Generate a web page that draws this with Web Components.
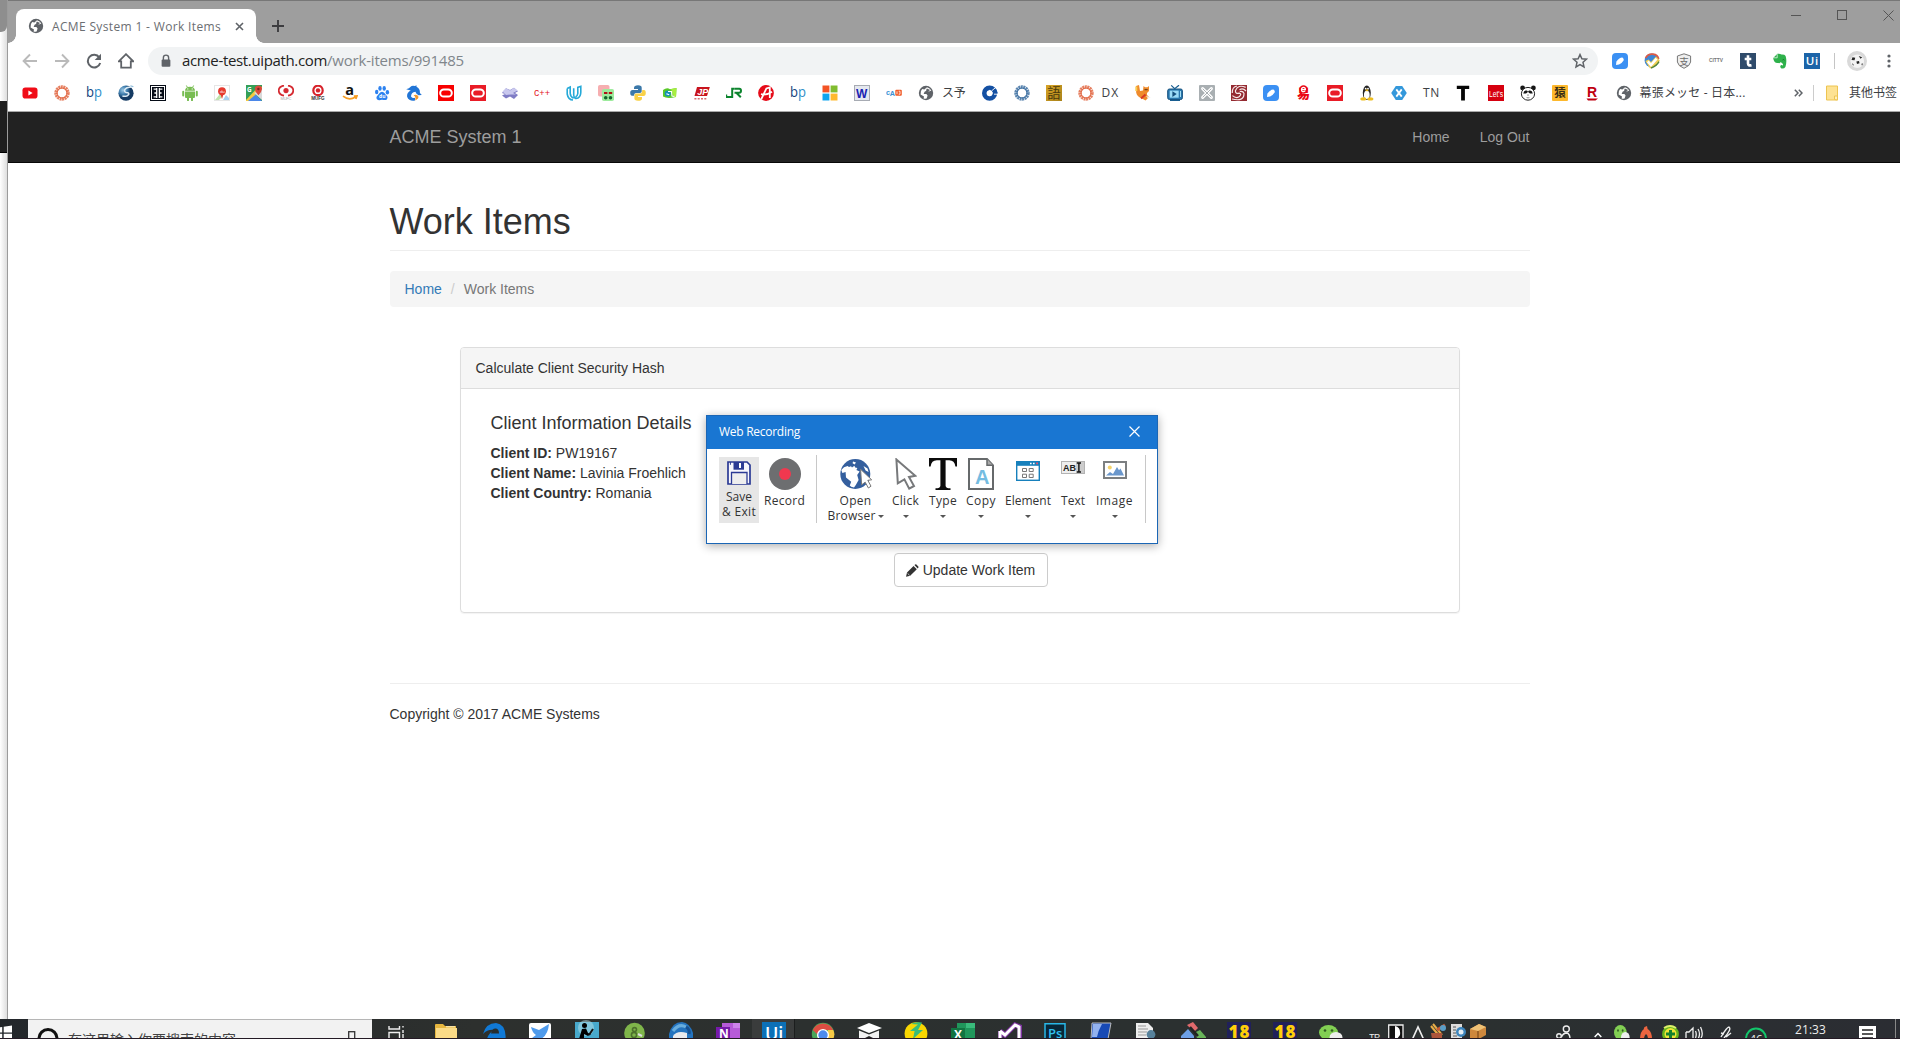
<!DOCTYPE html>
<html lang="zh">
<head>
<meta charset="utf-8">
<title>ACME System 1 - Work Items</title>
<style>
html,body{margin:0;height:100%;overflow:hidden;background:#fff}
body{font-family:"Liberation Sans","Noto Sans CJK SC",sans-serif}
</style>
</head>
<body>
<desktop-screen></desktop-screen>
<script>
const UI='"Open Sans","Noto Sans","Noto Sans CJK SC",sans-serif';
const globe='<circle cx="8" cy="8" r="7.2" fill="#5f6368"/><path d="M9 2.2Q12 3 13.3 5.4L11 6.6L8.8 5.6L6.6 6.8L5.6 9H8.4L9.6 10.6L8.6 13.6Q7 14 5.6 13.4L6 11.4L2.6 9.4Q2 6 4.2 3.9L6.4 4.6Z" fill="#fff"/><path d="M8.8 3.4L12.2 5L10 6.4L8 5.4Z" fill="#5f6368"/>';
const ring=c=>`<circle cx="8" cy="8" r="6" fill="none" stroke="${c}" stroke-width="3.4" stroke-dasharray="1.9 .5" opacity=".8"/><circle cx="8" cy="8" r="5" fill="none" stroke="${c}" stroke-width=".9"/>`;
const bp='<text x="0" y="11.6" font-family="Open Sans" font-size="15" fill="#12427c" textLength="16" lengthAdjust="spacingAndGlyphs"><tspan>b</tspan><tspan fill="#2e8ec8">p</tspan></text>';
const oracle=c=>`<rect width="16" height="16" fill="${c}"/><rect x="2.2" y="4.4" width="11.6" height="7.2" rx="3.6" fill="none" stroke="#fff" stroke-width="2"/>`;
const feather=`<rect width="16" height="16" rx="4" fill="#3b90f3"/><path d="M4 12L4.4 8.4Q7.6 4.4 10.4 4.6Q12.4 6 11.6 7.6Q9.4 11.2 7 11.4Z" fill="#fff"/>`;
const ic={
globe,
yt:'<rect x=".5" y="2.4" width="15" height="11.2" rx="2.8" fill="#f00c17"/><path d="M6.4 5.4L10.6 8L6.4 10.6Z" fill="#fff"/>',
ringO:ring('#e0603a'),ringB:ring('#33689c'),bp,
sphere:'<defs><radialGradient id="s" cx=".3" cy=".3"><stop offset="0" stop-color="#9cc9e5"/><stop offset=".6" stop-color="#3a78a8"/><stop offset="1" stop-color="#153b63"/></radialGradient></defs><circle cx="8" cy="8.2" r="7.6" fill="url(#s)"/><path d="M14.4 2Q8 1.8 6.6 5Q6 7.6 9.8 7.8Q12.4 9 8.8 11Q6.2 11.7 4.4 10.8" fill="none" stroke="#dcebf5" stroke-width="1.5"/><path d="M12.5 .8L15.4 1.6" stroke="#7fb2d4"/>',
blk:'<rect width="16" height="16" fill="#050b16"/><rect x="1.5" y="1.5" width="13" height="13" fill="none" stroke="#fff"/><path d="M6.7 3V13M9.4 3V13M3.6 4.2H6.7M4.4 8H6.7M3.6 11.8H6.7M9.4 4.2H12.4M9.4 8H11.6M9.4 11.8H12.4" stroke="#fff" stroke-width="1.3"/>',
android:'<path d="M3 5.7Q3.3 1.7 8 1.7T13 5.7ZM3 6.4H13V12Q13 13 12 13H4Q3 13 3 12Z" fill="#79bd53"/><path d="M1.2 6.8V10.6M14.8 6.8V10.6M6 12V15.2M10 12V15.2" stroke="#79bd53" stroke-width="2" stroke-linecap="round"/><path d="M4.4 .5L5.4 2.4M11.6 .5L10.6 2.4" stroke="#79bd53"/><circle cx="5.8" cy="3.9" r=".6" fill="#fff"/><circle cx="10.2" cy="3.9" r=".6" fill="#fff"/>',
pin:'<rect x=".5" y=".5" width="15" height="15" fill="#fff" stroke="#e6e6e6"/><path d="M1 15L6 9L8 12L5 15Z" fill="#bfe4ad"/><path d="M9 15L12 10L15 13V15Z" fill="#a7d3f1"/><circle cx="8" cy="6.2" r="3.9" fill="#e53a2f"/><path d="M6.4 9H9.6L8 14Z" fill="#e53a2f"/><text x="5.9" y="7.8" font-size="4" fill="#fff" font-family="Open Sans">du</text>',
gmap:'<rect width="16" height="16" fill="#349f57"/><path d="M0 16L8 8L16 16Z" fill="#4b87e8"/><path d="M0 15L13 1L16 2V4L2 16H0Z" fill="#f4ca3f"/><path d="M8 8L16 15V4Z" fill="#dadada"/><path d="M8.8 4A3.5 3.5 0 0 1 16 4Q15.7 7 12.5 10.3Q9 7 8.8 4Z" fill="#d9483b"/><circle cx="12.4" cy="4" r="1.2" fill="#7c241e"/><text x="1" y="6.8" font-size="6.4" fill="#fff" font-family="Open Sans" font-weight="700">G</text>',
mufc:'<path d="M6 .6Q.8 1.4 .7 5.6Q.9 9.7 6 10.7M10 .6Q15.2 1.4 15.3 5.6Q15.1 9.7 10 10.7" fill="none" stroke="#d52b32" stroke-width="1.8"/><circle cx="8" cy="5.6" r="2.6" fill="#d52b32"/><text x="2.5" y="15.4" font-size="4" fill="#aaa" font-family="Liberation Sans" textLength="11">MUFC</text>',
mufg:'<circle cx="8" cy="5.4" r="4.7" fill="none" stroke="#d7222a" stroke-width="2.2"/><circle cx="8" cy="5.4" r="2.2" fill="#d7222a"/><text x="1.2" y="15.2" font-size="4.6" font-weight="700" fill="#333" font-family="Liberation Sans" textLength="13.5">MUFG</text>',
amz:'<text x="3.2" y="9.7" font-size="14.5" font-weight="700" font-family="Open Sans" fill="#111">a</text><path d="M1 11.2Q7 16 13.5 12M11.8 11.2L15 11L13.8 14" fill="none" stroke="#f79d23" stroke-width="1.7"/>',
baidu:'<g fill="#2d82f0"><ellipse cx="2.7" cy="7" rx="1.7" ry="2.2"/><ellipse cx="6" cy="3.4" rx="1.7" ry="2.4"/><ellipse cx="10.2" cy="3.4" rx="1.7" ry="2.4"/><ellipse cx="13.4" cy="7.2" rx="1.7" ry="2.2"/><path d="M8 6.8Q10 6.8 12 10Q14.6 12 12.8 14.4Q11.7 15.6 8 14.8Q4.2 15.7 3 14.3Q1.4 12.2 4.2 9.8Q6 6.9 8 6.8Z"/></g><text x="5" y="13.4" font-size="5" font-weight="700" font-family="Open Sans" fill="#fff">du</text>',
dolphin:'<path d="M.2 4.2Q3.4 3.7 4.6 1.8Q6 0 9 1L10.5 .2V1.8Q14.2 3.6 13.9 8L15.8 10L12.6 10.2Q10 9 9.4 6.8Q5 7.6 5 11.5Q6.5 13.8 9 12.8V15.6Q3.2 16.7 1.2 12Q.4 7.4 4.8 5.4Z" fill="#2175d6"/><path d="M7.6 10.2Q10 8.8 12.2 11.1Q13.4 14 9 15.6Q10.5 12.3 7.6 10.2Z" fill="#f39a2f"/>',
orA:oracle('#f80000'),orB:oracle('#e91b26'),
cross:'<path d="M0 8L4 3.2L8 5L12 2.8L16 6.2L13 8L16 10L12 14L8 11.4L4 13.4L0 10.6L3 9Z" fill="#7f7cc5"/><path d="M.5 6.4L4 3.2L8 5.4L12 2.8L15.6 5.6L11 8L14 9.4L9 9.4L4 10Z" fill="#c9c8ee"/>',
cpp:'<text x="0" y="10.5" font-size="9" fill="#e3111b" font-family="Liberation Mono" textLength="16" lengthAdjust="spacingAndGlyphs">C++</text>',
uda:'<path d="M1.2 3.5L4.2 2V8.3Q4.4 12 7.6 13.3M7.7 3.2V10Q8 14.5 12 13Q14.8 11.4 14.8 7V1.3L11.8 2.4V8.5Q11.5 11 9.5 12M1.2 3.5V9Q2.2 14.8 7 15" fill="none" stroke="#25a9d8" stroke-width="1.6"/>',
db:'<rect x="0" y="0" width="11.5" height="11.5" rx="1.8" fill="#f6aeb0"/><rect x="4" y="4" width="12" height="12" rx="1.8" fill="#9deb9d"/><path d="M6 8H9.4M10.8 8H14.2" stroke="#b11217" stroke-width="2"/><circle cx="7.7" cy="12.7" r="1.8" fill="#15642c"/><circle cx="12.5" cy="12.7" r="1.8" fill="#15642c"/>',
py:'<path d="M4 3Q4 .3 8 .3T11.7 3V6.6Q11.7 8 10 8H6Q4 8 4 10.7H2Q.2 10.7 .2 7.8T2.8 5H8V4H4Z" fill="#3b78a9"/><path d="M12.2 5H14Q15.8 5 15.8 8T13.5 11H8V12H12V13.4Q12 15.7 8 15.7T4.4 13V10.2Q4.4 8.5 6.2 8.5H10Q12.2 8.5 12.2 6Z" fill="#f9d147"/>',
grn:'<path d="M1 5Q5 2 8 4.3L14.5 3L14 12Q5 14 1 11.5Z" fill="#59c928"/><path d="M9 4L14.5 3L14 12H12Z" fill="#a8ee3f"/><circle cx="5.7" cy="8.6" r="3" fill="#1590b8"/><path d="M6 6.5H9.5L10 11L12.4 11.3M4.4 8.7L7.2 9.8" fill="none" stroke="#fff" stroke-width="1.2"/>',
jp:'<path d="M3 2H15.8L13 11H.5Z" fill="#c8141d"/><text x="3.3" y="9.8" font-size="9" font-style="italic" font-weight="700" font-family="Liberation Sans" fill="#fff">JP</text><path d="M.4 13.8H12.5" stroke="#d86d70" stroke-width="1.6" stroke-dasharray="2 1.3"/>',
jr:'<path d="M.2 9.5V11.9H6.2V3.7H8.5M8.7 3.7H13.3Q15 3.8 15 5.7T13.3 7.7H8.5M10.6 8L14.8 12.3" fill="none" stroke="#0c842e" stroke-width="2"/>',
a:'<circle cx="8" cy="8" r="7.9" fill="#e60b19"/><path d="M3.2 14.3L8.4 3.4L11.8 2.5V13M3 9.2Q8 10.7 14 6.7" fill="none" stroke="#fff" stroke-width="1.8"/>',
ms:'<path d="M.5 .5H7.4V7.4H.5Z" fill="#f35325"/><path d="M8.6 .5H15.5V7.4H8.6Z" fill="#81bc2f"/><path d="M.5 8.6H7.4V15.5H.5Z" fill="#10a5ef"/><path d="M8.6 8.6H15.5V15.5H8.6Z" fill="#ffb92d"/>',
w:'<rect x=".5" y=".5" width="15" height="15" fill="#e5e8ef" stroke="#a7abb3"/><text x="2" y="12.8" font-size="12" font-weight="700" font-family="Liberation Sans" fill="#1823b3">W</text>',
cad:'<text x="0" y="9.7" font-size="7.2" font-weight="700" font-family="Liberation Sans" fill="#398fd4">c<tspan dx="-.3" dy="1">A</tspan></text><rect x="9.3" y="4.8" width="6.5" height="6" rx="1" fill="#f05b28"/><path d="M11 6.3V9.2M12.7 6.2H14V9.2H12.7" fill="none" stroke="#fff" stroke-width=".8"/>',
ccb:'<circle cx="7.6" cy="8.2" r="5.3" fill="none" stroke="#1450a3" stroke-width="4.6"/><path d="M10.5 1L14.4 4.5L16 8.4H11.5Z" fill="#1450a3"/><path d="M7.8 4.8L11 8L7.8 11.2L4.6 8Z" fill="#fff"/><path d="M9.5 6L13.8 2.4M12 9.2H16" stroke="#fff" stroke-width=".9"/>',
go:'<defs><linearGradient id="o" y2="1"><stop stop-color="#d7a326"/><stop offset="1" stop-color="#a9821a"/></linearGradient></defs><rect width="16" height="16" fill="url(#o)"/><text x="1.3" y="12.8" font-size="13.4" font-family="Noto Sans CJK JP" fill="#4a3a0c">語</text>',
cat:'<path d="M1 1L4 0L5 6L8 5.4L8.5 1L10 2.2H12.5L14 1V6L12 8V10L14 12L10.5 15.5L7 13.5Q2.2 12 1.2 7.8Z" fill="#ef8b2c"/><path d="M9.5 4.7H12.7" stroke="#5b3010"/><path d="M6 13.5L10.5 9.6" stroke="#d63a26" stroke-width="2"/><path d="M11 11L15.8 12.3L13 13.5Z" fill="#eee"/><path d="M1.3 1.5V6" stroke="#f8cd55" stroke-width="2"/>',
tv:'<rect x=".7" y="4" width="14.7" height="10.5" rx="1.7" fill="#2a78ae" stroke="#17527f"/><rect x="2.7" y="5.6" width="9" height="7.1" fill="#9bdbf7"/><path d="M5.4 6.2L9.7 9.1L5.4 12Z" fill="#164f7c"/><path d="M4.2 .4L7.7 3.7L12 .2M3 15.5H13" fill="none" stroke="#185d90" stroke-width="1.2"/><path d="M13.5 6V12" stroke="#a6def3"/>',
tool:'<rect width="16" height="16" rx="1" fill="#a9afb2"/><path d="M3.6 3.6L12.4 12.4M12.4 3.6L3.6 12.4" stroke="#fff" stroke-width="3" stroke-linecap="round"/><path d="M3.7 3.7L12.3 12.3M12.3 3.7L3.7 12.3" stroke="#a9afb2" stroke-width="1"/>',
swirl:'<rect width="16" height="16" fill="#942a31"/><path d="M14.7 2.4Q7-1 4.5 5.5Q4 9 8.3 8.2Q11.3 9 8 11.7Q5 13.8 1.4 10.6M15 6Q12 2.4 8.5 4.7M1 14Q13 17 13 8.4Q12 5.7 8.8 6.5M1.3 8Q1 2 6 1" fill="none" stroke="#f7e8e8" stroke-width="1.2"/>',
feather,
yi:'<text x="2" y="13.4" font-size="13" font-weight="900" font-family="Noto Sans CJK SC" fill="#ea0714">易</text><circle cx="8.5" cy="4.5" r="4.2" fill="#ea0714"/><path d="M6.6 4.6H10.4Q10.4 2.4 8.5 2.4T6.5 4.6T8.7 6.6L10.3 6" fill="none" stroke="#fff" stroke-width="1.2"/>',
tux:'<ellipse cx="7.8" cy="7.8" rx="4" ry="7.3" fill="#252525"/><ellipse cx="7.8" cy="10" rx="2.9" ry="4.3" fill="#fff"/><circle cx="6.7" cy="3.7" r=".9" fill="#fff"/><circle cx="9" cy="3.7" r=".9" fill="#fff"/><path d="M6 5L8 4.2L9.8 5.1L8 6.5Z" fill="#e8b41b"/><ellipse cx="4.3" cy="13.9" rx="3" ry="1.6" fill="#edbd21"/><ellipse cx="11.4" cy="13.9" rx="3" ry="1.6" fill="#edbd21"/>',
xam:'<path d="M4.8 1H11.2L15.8 8L11.2 15H4.8L.2 8Z" fill="#3498db"/><path d="M5.3 4.4L10.7 11.6M10.7 4.4L5.3 11.6" stroke="#fff" stroke-width="1.8"/>',
T:'<path d="M.8 .8H13.2V3.9H8.9V15.6H5.1V3.9H.8Z" fill="#050505"/>',
lets:'<rect width="16" height="16" fill="#d6000f"/><text x="1" y="11.7" font-size="8.5" font-family="Liberation Sans" fill="#fff" textLength="14" lengthAdjust="spacingAndGlyphs">Let\'s</text>',
panda:'<circle cx="2.6" cy="3" r="2.4" fill="#161616"/><circle cx="13.4" cy="3" r="2.4" fill="#161616"/><ellipse cx="8" cy="8.8" rx="6.6" ry="6.4" fill="#fff" stroke="#222"/><path d="M3.2 8.4Q4 4.9 6.7 5.6T6 8.6ZM12.8 8.4Q12 4.9 9.3 5.6T10 8.6Z" fill="#171717"/><path d="M7.2 9.8H8.8L8 10.8Z"/><path d="M6.6 12.6Q8 13.2 9.4 12.6" fill="none" stroke="#555" stroke-width=".7"/>',
yuan:'<rect width="16" height="16" rx="1" fill="#fdb82c"/><text x="2.3" y="12.2" font-size="11.5" font-weight="700" font-family="Noto Sans CJK SC" fill="#3a2d14">猿</text>',
R:'<text x="3" y="12" font-size="14" font-weight="700" font-family="Liberation Sans" fill="#bf0010">R</text><path d="M2.5 13.4H14L11.5 15.4H4Z" fill="#bf0010"/>',
folder:'<path d="M1.5 1H12.5V15H1.5Z" fill="#fde293" stroke="#edc451"/><path d="M9.5 14.5V11H12.5V15Z" fill="#fff0bd" stroke="#edc451"/>',
back:'<path d="M15 8H2M8 1.5L1.6 8L8 14.5" fill="none" stroke="#bababa" stroke-width="1.9"/>',
fwd:'<path d="M1 8H14M8 1.5L14.4 8L8 14.5" fill="none" stroke="#bababa" stroke-width="1.9"/>',
reload:'<path d="M13.3 4.5A6.3 6.3 0 1 0 14.2 10" fill="none" stroke="#5f6368" stroke-width="2"/><path d="M15 .7V7H8.7Z" fill="#5f6368"/>',
home:'<path d="M.8 8.3L8 1.2L15.2 8.3H12.8V14.7H3.2V8.3Z" fill="none" stroke="#5f6368" stroke-width="1.8"/>',
lock:'<rect x="3" y="6.2" width="10" height="8.3" rx="1.2" fill="#5f6368"/><path d="M5 7V4.2Q5 1.3 8 1.3T11 4.2V7" fill="none" stroke="#5f6368" stroke-width="1.6"/>',
star:'<path d="M8 1.6L9.9 5.8L14.5 6.2L11 9.3L12 13.9L8 11.5L4 13.9L5 9.3L1.5 6.2L6.1 5.8Z" fill="none" stroke="#5f6368" stroke-width="1.5"/>',
chk:'<circle cx="7.6" cy="7.4" r="7" fill="#3c86d6"/><path d="M1.6 5Q4 .6 9 1.2T14.6 6" stroke="#dd5b45" stroke-width="1.8" fill="none"/><path d="M1.4 8L6 15.4Q13 13 15.8 7.5L12 3.4L7 9L4.6 6.4Z" fill="#f0cf55"/><path d="M3.8 8.4L7 12L12.6 5.6" fill="none" stroke="#fff" stroke-width="2.5"/><path d="M7 15Q12.6 13 15 8.6" fill="none" stroke="#54863b" stroke-width="1.4"/>',
zhi:'<path d="M8 .8L14.6 3V9Q14 13 8 15.3Q2 13 1.4 9V3Z" fill="#eee" stroke="#777"/><text x="3.2" y="11.5" font-size="9.6" font-family="Noto Sans CJK SC" fill="#6b6b6b">支</text>',
city:'<text x="1" y="9" font-size="5.4" font-weight="700" font-family="Liberation Sans" fill="#777" textLength="14" lengthAdjust="spacingAndGlyphs">CITTV</text>',
tum:'<rect width="16" height="16" fill="#2f4b6b"/><path d="M8 2.2V10.6Q8 13 11.5 12.2M4.7 6H11.3" fill="none" stroke="#fff" stroke-width="2.6"/>',
ever:'<path d="M1.2 5L5.4 .8Q8 .4 9.4 1.6Q12.6 1.4 13.6 3Q15.2 8.6 13.4 14Q12 16 9.4 15.4Q7.4 14 8.8 12.2Q10 11.6 11 12.6Q11.4 10.6 9.8 10L8.8 9Q8 10.6 6.4 10Q1.9 10.8 1.2 5Z" fill="#2eb14b"/><path d="M1.6 4.8H5.2V1.2" fill="none" stroke="#fff" stroke-width=".7"/><path d="M10.6 7Q11.6 6 12.4 7.2" fill="none" stroke="#176c2c"/>',
ui:'<rect width="16" height="16" fill="#1c64a8"/><text x="1.8" y="12.3" font-size="11.5" font-weight="600" font-family="Open Sans" fill="#fff" textLength="12.5">Ui</text>',
ava:'<circle cx="8" cy="8" r="8" fill="#d9d9d9"/><circle cx="8.2" cy="8.2" r="5.4" fill="#f4f4f4"/><path d="M4.4 5L6.6 5.3L6 7.4L3.6 7.2ZM9.4 4L12.2 5L10.8 6.2ZM7.5 8.4L9.6 8L10 9.8L8 10.4ZM4 9.8L5.2 10.6L5 12ZM11.5 10.2L12.8 9.9L12 11.8Z" fill="#252525"/>'
};
const win={
save:['0 0 24 24','<path d="M1 1H20L23 4V23H1Z" fill="#f6f6fc" stroke="#2b3a94" stroke-width="1.7"/><path d="M6.5 1H17V8.7H6.5Z" fill="#2b3a94"/><path d="M13 2V7" stroke="#fff" stroke-width="2"/><path d="M4.5 23V11.5H20V23" fill="#eee" stroke="#2b3a94" stroke-width="1.3"/><path d="M3.4 1V3.8" stroke="#2b3a94"/>'],
rec:['0 0 32 32','<circle cx="16" cy="16" r="16" fill="#6d6e70"/><circle cx="16" cy="16" r="6" fill="#f0384f"/>'],
open:['0 0 32 32','<circle cx="15.3" cy="16" r="15" fill="#345f9e"/><path d="M1.3 12Q3.6 8.6 7.6 8L9 9L11 8.2L12 9.6L14.4 7.8L15.2 9.6L17.4 10L16.4 12L19.6 13.4L17.2 17L18.6 22L15.8 27L14 29.6Q10.5 29 9.8 27.6L11.2 23.7L6 19.5L5.6 14L2.4 15Z" fill="#fff"/><path d="M13 3.4L16 4.4L14.6 6.4L12.6 5.2ZM23.5 8L27.5 10.4L28.6 14L25.6 12.6Z" fill="#fff"/><path d="M20.6 11.3L31.7 21.8L27.8 22.3L31 28.2L28.4 30L25.2 24.2L21.6 26.8Z" fill="#fff" stroke="#777"/>'],
click:['0 0 22 32','<path d="M1.4 1.4L20.2 17.8L14 19L19 28L14.2 30.6L9.4 21.4L2.8 25.3Z" fill="#fff" stroke="#77797b" stroke-width="2"/>'],
type:['0 0 28 32','<path d="M0 0H28V8.5H26.4Q25.6 2.2 20.2 2.2H16.6V27.7Q16.6 30.2 21.5 30.3V32H6.5V30.3Q11.4 30.2 11.4 27.7V2.2H7.8Q2.4 2.2 1.6 8.5H0Z" fill="#0b0b0b"/>'],
copy:['0 0 26 32','<path d="M1 1H19L25 7.3V31H1Z" fill="#fff" stroke="#66696b" stroke-width="2"/><path d="M19 1V7.3H25" fill="#aaa" stroke="#66696b" stroke-width="1.5"/><text x="7" y="26" font-size="20" font-weight="700" font-family="Liberation Sans" fill="#74bce1">A</text>'],
elem:['0 0 24 20','<rect x=".7" y=".7" width="22.6" height="18.6" fill="#fff" stroke="#1780bc" stroke-width="1.4"/><path d="M0 0H24V4.8H0Z" fill="#1780bc"/><path d="M14 2.4H15.6M17 2.4H18.6" stroke="#fff" stroke-width="1.5"/><path d="M20.2 2.4H22" stroke="#f44b68" stroke-width="1.6"/><path d="M6.5 7.5H10.5V10.5H6.5ZM13.2 7.5H17.2V10.5H13.2ZM6.5 13.2H10.5V16.5H6.5ZM13.2 13.2H17.2V16.5H13.2Z" fill="none" stroke="#777"/>'],
text:['0 0 24 13','<rect x=".5" y=".5" width="23" height="12" fill="#eee" stroke="#b3b3b3"/><rect x="15" y="1" width="8" height="11" fill="#ccc"/><text x="2" y="9.6" font-size="9" font-weight="700" font-family="Liberation Sans" fill="#222" textLength="13" lengthAdjust="spacingAndGlyphs">AB</text><path d="M15.8 2H20M15.8 11H20M17.9 2V11" stroke="#111" stroke-width="1.4"/>'],
image:['0 0 24 18','<rect x="1" y="1" width="22" height="16" fill="#fff" stroke="#7c7f81" stroke-width="2"/><path d="M3 14.5L7 11L10 13L14 6L16 9.2L17.5 7.6L21 14.5Z" fill="#6a97cc"/><circle cx="6.8" cy="6.5" r="2" fill="#f5d46b"/>']
};
const tb={
start:['0 0 13 20','<path d="M0 8.3L2.2 8V13.4H0ZM3.7 7.7L12 6.6V13.4H3.7ZM0 14.8H2.2V20H0ZM3.7 14.8H12V20H3.7Z" fill="#fff"/>'],
view:['0 0 17 20','<path d="M1 7V10H11.5V7M1 20V13.5H11.5V20M15 7V8.5M15 11V14M15 15V20" fill="none" stroke="#eee" stroke-width="1.4"/>'],
fold:['0 0 22 20','<path d="M0 6Q0 5 1 5H8L10 7H21V20H0Z" fill="#e7b73f"/><path d="M1 9H22V20H1Z" fill="#fbdb87"/><path d="M11 7.8H20" stroke="#fff4cf"/>'],
edge:['0 0 24 20','<path d="M0 15Q3 4 13 4Q22 5 22.6 17V19H8Q8 20 9 20H4Q5 15 11 11Q5 10 0 15Z" fill="#1079d6"/><path d="M8 14.5Q9 9 13 9.5Q16 10 16 14.5Z" fill="#262e30"/>'],
bird:['0 0 22 20','<rect y="4" width="22" height="20" rx="2" fill="#fff"/><path d="M2 8L10 11L20 5Q19 16 12 20L3 19L7 16Q3 13 2 8Z" fill="#4f9bec"/>'],
read:['0 0 24 20','<rect y="3" width="24" height="17" fill="#48a9cc"/><circle cx="11" cy="9" r="8" fill="#b9e3ec" opacity=".5"/><circle cx="9.5" cy="6.5" r="2.5"/><path d="M4 20L7 10L11 9.5L13 14L16 15L13 17L9 15V20Z"/><path d="M14 16L18 10" stroke="#111" stroke-width="2"/>'],
gc:['0 0 21 20','<circle cx="10.5" cy="14" r="10.3" fill="#7fb54a"/><circle cx="10.5" cy="10.6" r="2" fill="none" stroke="#4c702c" stroke-width="1.6"/><circle cx="10" cy="16" r="2.6" fill="none" stroke="#4c702c" stroke-width="1.6"/><path d="M14 15L18 17" stroke="#ddd" stroke-width="2"/>'],
thun:['0 0 24 20','<path d="M0 15Q3 3 13 3Q21 4 24 14V20H0Z" fill="#2473bf"/><path d="M4 17Q8 11 18 14V20H4Z" fill="#e9e9ed"/><path d="M4 12Q10 4 17 8" stroke="#68adde" stroke-width="3" fill="none"/><path d="M17 8Q21 10 20 15" stroke="#175091" stroke-width="3" fill="none"/>'],
one:['0 0 24 20','<path d="M6 4H24V20H6Z" fill="#b75bd8"/><path d="M17 4H24V9H17Z" fill="#ce83eb"/><path d="M0 8H14V20H0Z" fill="#7719aa"/><text x="3" y="19.4" font-size="12" font-weight="700" fill="#fff" font-family="Open Sans">N</text>'],
uip:['0 0 24 20','<path d="M0 3H24V20H0Z" fill="#0c70b7"/><text x="3" y="21" font-size="18" font-weight="600" fill="#fff" font-family="Open Sans">Ui</text>'],
chrome:['0 0 24 20','<circle cx="12" cy="15" r="11.2" fill="#4aa65a"/><path d="M1.8 11A11.2 11.2 0 0 1 22.2 11H12L7 16Z" fill="#dd4d42"/><path d="M22.2 11Q25 16 21 22H14L17 11Z" fill="#f7ca45"/><circle cx="12" cy="16" r="6" fill="#fff"/><circle cx="12" cy="16" r="4.7" fill="#4d8bed"/>'],
box:['0 0 26 20','<path d="M0 9L12 4L25 9L12 14Z" fill="#fff"/><path d="M2 11L12 15L22 11V20H2Z" fill="#222"/><path d="M2 11.5L12 15.6L22 11.5V20H18L12 17L6 20H2Z" fill="#f2f2f2"/>'],
yel:['0 0 24 20','<circle cx="12" cy="14.6" r="11.4" fill="#f9d702"/><path d="M7 5Q12 2.4 18 3.6L14 11H19L9 20L10.6 12H6L14 5.4Z" fill="#38bd79"/>'],
xl:['0 0 24 20','<path d="M6 4H24V20H6Z" fill="#20965b"/><path d="M15 4H24V9H15Z" fill="#39bb7b"/><path d="M0 9H14V20H0Z" fill="#127441"/><text x="3" y="19.6" font-size="12" font-weight="700" fill="#fff" font-family="Open Sans">X</text>'],
vs:['0 0 24 20','<path d="M2 12L7 16L17 6L22 8V20M2 12V20" fill="none" stroke="#7c329e" stroke-width="5"/><path d="M2 12L7 16L17 6L21 8V20M2 12V20" fill="none" stroke="#fff" stroke-width="3"/>'],
ps:['0 0 22 20','<path d="M1 4.8H21V20H1Z" fill="#082739" stroke="#29b7e8" stroke-width="1.5"/><text x="4" y="19" font-size="13" font-weight="600" fill="#31bfef" font-family="Open Sans">Ps</text>'],
blue:['0 0 22 20','<path d="M2 4L21 4L18 20H1Z" fill="#184ab5" stroke="#bbb"/><path d="M3 5H12Q8 12 7 18H2Z" fill="#93b2ee"/>'],
doc:['0 0 20 20','<path d="M0 4H12L17 9V20H0Z" fill="#eee"/><path d="M2 7H10M2 10H12M2 13H11M2 16H10" stroke="#999"/><circle cx="15" cy="15.5" r="4.4" fill="#57819b"/>'],
git:['0 0 25 20','<path d="M6 6L12 3L17 9L13 13Z" fill="#e0696c"/><path d="M0 17L7 10L13 17V20H0Z" fill="#6d9fe6"/><path d="M15 13L19 11L25 18V20H16Z" fill="#69b45a"/><path d="M9 8L17 17" stroke="#222" stroke-width="2.4"/>'],
n18:['0 0 24 20','<path d="M0 3H24V20H0Z" fill="#20205a"/><text x="1.5" y="19.4" font-size="17" font-weight="800" fill="#ffcf09" font-family="Open Sans" textLength="21">18</text>'],
wx:['0 0 24 20','<ellipse cx="9.5" cy="13.5" rx="9.5" ry="7.5" fill="#82cf53"/><circle cx="6" cy="11.5" r="1.3" fill="#315e22"/><circle cx="13" cy="11.5" r="1.3" fill="#315e22"/><ellipse cx="17" cy="18.5" rx="6.5" ry="5.5" fill="#eee"/>'],
tp:['0 0 12 20','<path d="M0 0" /><text y="20.5" font-size="9" fill="#eee" font-family="Liberation Sans" textLength="11">TP</text>'],
half:['0 0 16 20','<path d="M.7 6H15V20H.7Z" fill="#111" stroke="#eee" stroke-width="1.3"/><path d="M7 7Q13 8 12 16L9 20H7Z" fill="#fff"/>'],
lam:['0 0 14 20','<path d="M1.5 20L7 8L12.5 20" fill="none" stroke="#eee" stroke-width="1.6"/>'],
pens:['0 0 16 20','<path d="M1 7L10 18M3 5L12 16" stroke="#e8ad47" stroke-width="2"/><path d="M7 11L15 6" stroke="#c95b36" stroke-width="3"/><circle cx="13" cy="9" r="3" fill="#5a9dc6"/><path d="M1 14H12V20H2Z" fill="#ad553b"/>'],
info:['0 0 15 20','<path d="M0 5H11V20H0Z" fill="#ddd"/><path d="M2 8H5M2 11H5M2 14H5M2 17H6" stroke="#555"/><circle cx="10" cy="13" r="5" fill="#3d85bc"/><circle cx="10" cy="13" r="2.5" fill="#e5eef4"/>'],
brick:['0 0 16 20','<path d="M0 10L9 5L16 8V16L9 20H0Z" fill="#ce883d"/><path d="M0 10L9 5L16 8L8 12Z" fill="#efc276"/><path d="M8 12V20" stroke="#6a3d17"/>'],
ppl:['0 0 15 20','<circle cx="10.3" cy="10" r="3" fill="none" stroke="#eee" stroke-width="1.4"/><path d="M5.5 18Q7 14 11 14Q14 15 14 20" fill="none" stroke="#eee" stroke-width="1.4"/><circle cx="3" cy="17" r="2.3" fill="none" stroke="#eee" stroke-width="1.4"/>'],
up:['0 0 8 20','<path d="M.7 18L4 14.5L7.3 18" fill="none" stroke="#fff" stroke-width="1.5"/>'],
fire:['0 0 12 20','<path d="M0 20Q0 13 4 10Q3 8 7 7Q7 10 9 11Q12 14 12 20H8Q8 16 6 15Q4 17 4 20Z" fill="#ec6540"/>'],
plus:['0 0 17 20','<circle cx="8.5" cy="15" r="8.4" fill="#65b51e"/><circle cx="8.5" cy="15" r="6" fill="#efe437"/><path d="M2 9Q8 5 14 9" stroke="#ddf06a" stroke-width="2" fill="none"/><path d="M8.5 11V20M4 15H13" stroke="#15812e" stroke-width="3"/>'],
vol:['0 0 18 20','<path d="M1 13H4L8 9V20M1 13V20M10.5 12Q12 15 10.5 19M13 10Q16 15 13 20M15.5 8Q19 15 15.5 20" fill="none" stroke="#eee" stroke-width="1.3"/>'],
pen:['0 0 12 20','<path d="M1 18Q7 8 9 8Q12 10 4 19M6 18L11 14M1 14L4 15" fill="none" stroke="#eee" stroke-width="1.4"/>'],
n46:['0 0 22 20','<circle cx="11" cy="19.5" r="10" fill="none" stroke="#13c66b" stroke-width="2"/><text x="4.5" y="23.5" font-size="11.5" fill="#eee" font-family="Open Sans" textLength="13">46</text>'],
note:['0 0 18 20','<path d="M0 7H17V20H0Z" fill="#fff"/><path d="M3 11H14M3 15H14M3 19H14" stroke="#222" stroke-width="1.5"/>']
};
function def(name,css,html,after){
  customElements.define(name,class extends HTMLElement{
    constructor(){super();this.attachShadow({mode:'open'})}
    connectedCallback(){
      const h=typeof html==='function'?html(this):html;
      this.shadowRoot.innerHTML=`<style>:host{display:block;box-sizing:border-box}${css}</style>${h}`;
      if(after)after(this);
    }
  });
}
/* text tracked to an exact advance width */
def('fit-text',':host{display:inline-block;white-space:pre}span{display:inline-block}','<span><slot></slot></span>',el=>{
  const s=el.shadowRoot.querySelector('span'),w=+el.getAttribute('w');
  el.style.width=w+'px';
  const n=[...el.textContent].length;
  s.style.letterSpacing=((w-s.getBoundingClientRect().width)/n)+'px';
});
def('web-icon',':host{display:block;flex:none}svg{display:block;width:100%;height:100%}',el=>{
  const s=+(el.getAttribute('size')||16);el.style.width=el.style.height=s+'px';
  return `<svg viewBox="0 0 16 16">${ic[el.getAttribute('name')]}</svg>`;
});
def('big-icon',':host{flex:none}svg{display:block}',el=>{
  const n=el.getAttribute('name'),[vb,b]=win[n]||tb[n],p=vb.split(' ');
  return `<svg width="${el.getAttribute('w')||p[2]}" height="${p[3]}" viewBox="${vb}" preserveAspectRatio="none">${b}</svg>`;
});
def('tab-strip',`:host{display:flex;height:43px;background:#9e9e9e;border-top:1px solid #777;padding-left:8px;font:12px ${UI}}
.tab{position:relative;display:flex;align-items:center;width:240px;height:34px;margin-top:8px;background:#fff;border-radius:8px 8px 0 0;box-sizing:border-box;padding:0 12px 0 12px;color:#6b6e72}
.tab:before,.tab:after{content:"";position:absolute;bottom:0;width:8px;height:8px;background:radial-gradient(circle at 0 0,transparent 7.5px,#fff 8px)}
.tab:before{left:-8px}.tab:after{right:-8px;transform:scaleX(-1)}
fit-text{margin-left:8px}.x{margin-left:14px}.plus{margin:19px 0 0 16px;height:12px}.ctl{margin:9px 6px 0 auto;height:11px;display:flex;gap:35px}svg{display:block}`,
`<div class="tab"><web-icon name="globe"></web-icon><fit-text w="169">ACME System 1 - Work Items</fit-text><svg class="x" width="9" height="9"><path d="M1 1L8 8M8 1L1 8" stroke="#5f6368" stroke-width="1.6"/></svg></div>
<svg class="plus" width="12" height="12"><path d="M6 0V12M0 6H12" stroke="#3c3c3f" stroke-width="1.9"/></svg>
<div class="ctl"><svg width="11" height="11"><path d="M0 5.5H10" stroke="#555"/></svg><svg width="11" height="11"><rect x=".5" y=".5" width="9" height="9" fill="none" stroke="#555"/></svg><svg width="11" height="11"><path d="M.5 .5L10.5 10.5M10.5 .5L.5 10.5" stroke="#555"/></svg></div>`);
def('address-bar',`:host{display:flex;align-items:center;height:36px;padding-left:14px;font:15px ${UI};color:#222}
.nav{display:flex;gap:16px;width:126px}.box{display:flex;align-items:center;width:1450px;height:28px;border-radius:14px;background:#f1f3f4;box-sizing:border-box;padding:0 10px 0 11px}
.url{margin:-2px 0 0 9px;display:flex}.p{color:#80868b}web-icon.s{margin-left:auto}.ext{display:flex;gap:16px;margin-left:14px;align-items:center}
.sep{width:1px;height:16px;background:#c5c5c5;margin:0 12px 0 14px}.dots{margin-left:20px}`,
`<div class="nav"><web-icon name="back"></web-icon><web-icon name="fwd"></web-icon><web-icon name="reload"></web-icon><web-icon name="home"></web-icon></div>
<div class="box"><web-icon name="lock" size="14"></web-icon><div class="url"><fit-text w="145">acme-test.uipath.com</fit-text><fit-text class="p" w="137">/work-items/991485</fit-text></div><web-icon class="s" name="star"></web-icon></div>
<div class="ext">${['feather','chk','zhi','city','tum','ever','ui'].map(n=>`<web-icon name="${n}"></web-icon>`).join('')}</div>
<div class="sep"></div><web-icon name="ava" size="20"></web-icon><svg class="dots" width="4" height="14"><circle cx="2" cy="2" r="1.6" fill="#5f6368"/><circle cx="2" cy="7" r="1.6" fill="#5f6368"/><circle cx="2" cy="12" r="1.6" fill="#5f6368"/></svg>`);
const marks='yt ringO bp sphere blk android pin gmap mufc mufg amz baidu dolphin orA orB cross cpp uda db py grn jp jr a bp ms w cad'.split(' ');
const wi=a=>a.map(n=>`<web-icon name="${n}"></web-icon>`).join('');
def('bookmark-bar',`:host{display:flex;align-items:center;gap:16px;height:33px;padding:3px 0 7px 14px;border-bottom:1px solid #aaa;font:12px ${UI};color:#3c4043;line-height:16px}
fit-text{flex:none}.t{margin-left:-8px}.tn{margin-right:-.5px}.more{margin-left:auto}.sep{width:1px;height:16px;background:#ccc;margin:0 -5px 0 -6px}.r{margin-right:3px}`,
wi(marks)+`<web-icon name="globe"></web-icon><fit-text class="t" w="23.5">ス予</fit-text>`+wi(['ccb','ringB','go','ringO'])+`<fit-text class="t" w="17.5">DX</fit-text>`+wi('cat tv tool swirl feather yi orB tux xam'.split(' '))+`<fit-text class="tn" w="17">TN</fit-text>`+wi('T lets panda yuan R globe'.split(' '))+`<fit-text class="t" w="106">幕張メッセ - 日本...</fit-text><svg class="more" width="9" height="8"><path d="M.8 .8L4 4L.8 7.2M4.8 .8L8 4L4.8 7.2" fill="none" stroke="#5f6368" stroke-width="1.5"/></svg><div class="sep"></div><web-icon name="folder"></web-icon><fit-text class="t r" w="48">其他书签</fit-text>`);
def('acme-navbar',`:host{display:flex;align-items:center;height:51px;background:#222;border-bottom:1px solid #080808;color:#9d9d9d;font-size:14px;padding-left:381.5px}
.in{display:flex;align-items:center;width:1140px}.b{font-size:18px}.l{margin-left:auto;display:flex;gap:30px}`,
`<div class="in"><span class="b">ACME System 1</span><div class="l"><span>Home</span><span>Log Out</span></div></div>`);
def('bread-crumb',`:host{display:flex;height:36px;align-items:center;padding:0 15px;background:#f5f5f5;border-radius:4px;color:#777}a{color:#337ab7}i{font-style:normal;color:#ccc;margin:0 9px}`,'<a>Home</a><i>/</i><span>Work Items</span>');
def('acme-panel',`:host{width:1000px;height:266px;border:1px solid #ddd;border-radius:4px;box-shadow:0 1px 1px rgba(0,0,0,.05);display:flex;flex-direction:column}
header{flex:none;height:41px;box-sizing:border-box;background:#f5f5f5;border-bottom:1px solid #ddd;padding:10px 15px 0;border-radius:3px 3px 0 0}
main{padding:24px 30px 0;display:flex;flex-direction:column;flex:1;box-sizing:border-box}`,
`<header><slot name="title"></slot></header><main><slot></slot></main>`);
def('acme-button',`:host{display:flex;align-items:center;justify-content:center;width:154px;height:34px;border:1px solid #ccc;border-radius:4px;gap:4px;color:#333}svg{display:block}`,
`<svg width="13" height="13" viewBox="0 0 13 13"><path d="M0 12.8L1 8.6L7.5 2L10.8 5.3L4.2 11.8ZM8.4 1.1L9.2 .4Q9.8 0 10.4 .5L12.3 2.4Q12.8 3 12.4 3.6L11.7 4.4Z" fill="#333"/><path d="M1.6 9.4L3.6 11.3" stroke="#fff" stroke-width=".7"/></svg><slot></slot>`);
def('acme-page',`:host{flex:1;padding-left:381.5px;font-size:14px;line-height:20px;color:#333}
.c{width:1140px;display:flex;flex-direction:column}h1{font-size:36px;line-height:42px;font-weight:400;margin:38px 0 0;height:49px;border-bottom:1px solid #eee}
bread-crumb{margin-top:20px}acme-panel{margin:40px 0 0 70px}h4{font-size:18px;font-weight:400;line-height:20px;margin:0 0 10px}
acme-button{flex:none;margin:50px 0 0 403px}hr{border:0;border-top:1px solid #eee;margin:70px 0 20px;width:100%}`,
`<div class="c"><h1>Work Items</h1><bread-crumb></bread-crumb><acme-panel><span slot="title">Calculate Client Security Hash</span><h4>Client Information Details</h4><div><b>Client ID:</b> PW19167</div><div><b>Client Name:</b> Lavinia Froehlich</div><div><b>Client Country:</b> Romania</div><acme-button>Update Work Item</acme-button></acme-panel><hr><div>Copyright © 2017 ACME Systems</div></div>`);
def('tool-item',`:host{display:flex;flex-direction:column;align-items:center;flex:none}.i{height:35px;padding-top:var(--top,0);box-sizing:border-box}.t{display:flex;flex-direction:column;align-items:center;height:15px;line-height:15px}.s{height:15px;display:flex;align-items:center;gap:2px}.s:after{content:"";display:var(--arrow,block);border:3px solid transparent;border-top-color:#555;border-bottom:0;margin-top:1px}`,
`<div class="i"><slot name="icon"></slot></div><div class="t"><slot></slot></div><div class="s"><slot name="sub"></slot></div>`);
const tool=(n,w,m,t,top)=>`<tool-item style="width:${w}px;margin-left:${m}px;--top:${top}px"><big-icon slot="icon" name="${n}"></big-icon><fit-text w="${w}">${t}</fit-text></tool-item>`;
def('recorder-window',`:host{display:flex;flex-direction:column;width:452px;height:129px;background:#fff;border:1px solid #1b66b5;box-shadow:0 2px 9px rgba(0,0,0,.33);font:12px ${UI};color:#333}
header{height:33px;background:#1976d2;color:#fff;display:flex;align-items:center;justify-content:space-between;padding:0 17px 2px 12px;box-sizing:border-box}
main{display:flex;align-items:flex-start;padding:6px 0 0 12px}.save{width:40px;height:66px;background:#e6e6e6;margin-top:2px;padding-top:4px;box-sizing:border-box;display:flex;flex-direction:column;align-items:center;line-height:15px}
.save big-icon{height:28px}tool-item{margin-top:3px}.sep{width:1px;height:68px;background:#c8c8c8}.rec{--arrow:none}`,
`<header><fit-text w="81">Web Recording</fit-text><svg width="11" height="11"><path d="M.5 .5L10.5 10.5M10.5 .5L.5 10.5" stroke="#fff" stroke-width="1.2"/></svg></header>
<main><div class="save"><big-icon name="save"></big-icon><fit-text w="26">Save</fit-text><fit-text w="34">&amp; Exit</fit-text></div>
<tool-item class="rec" style="width:41px;margin-left:5px"><big-icon slot="icon" name="rec"></big-icon><fit-text w="41">Record</fit-text></tool-item>
<div class="sep" style="margin-left:11px"></div>
<tool-item style="width:55px;margin-left:11px"><big-icon slot="icon" name="open"></big-icon><fit-text w="32">Open</fit-text><fit-text slot="sub" w="48">Browser</fit-text></tool-item>
${tool('click',27,9,'Click',0)}${tool('type',28,10,'Type',0)}${tool('copy',30,9,'Copy',0)}${tool('elem',46,9,'Element',3)}${tool('text',24,10,'Text',3)}${tool('image',37,11,'Image',3)}
<div class="sep" style="margin-left:12px"></div></main>`);
const slots=[['view',388,17],['fold',435,22],['edge',483,24],['bird',529,22],['read',575,24],['gc',624,21],['thun',669,24],['one',716,24],['uip',752,43],['chrome',811,24],['box',857,26],['yel',904,24],['xl',951,24],['vs',998,24],['ps',1044,22],['blue',1090,22],['doc',1136,20],['git',1181,25],['n18',1227,24],['n18',1273,24],['wx',1319,24],['tp',1369,12],['half',1388,16],['lam',1411,14],['pens',1430,16],['info',1451,15],['brick',1470,16],['ppl',1556,15],['up',1594,8],['wx',1614,16],['fire',1640,12],['plus',1662,17],['vol',1685,18],['pen',1720,12],['n46',1745,22],['clock',1795,31],['note',1859,18]];
let end=372;
const bar=slots.map(([n,x,w])=>{
  const m=x-end;end=x+w;
  if(n==='clock')return `<fit-text class="ck" style="margin-left:${m}px" w="31">21:33</fit-text>`;
  if(n==='uip')return `<div class="act" style="margin-left:${m}px"><big-icon name="uip"></big-icon></div>`;
  return `<big-icon name="${n}" w="${w}" style="margin-left:${m}px"></big-icon>`;
}).join('')+'<div class="peek"></div>';
def('task-bar',`:host{display:flex;width:1900px;height:20px;overflow:hidden;background:linear-gradient(90deg,#23272b 0,#2d302e 25%,#2b3030 60%,#2b3030 78%,#2b2d33 100%);font:12px ${UI};color:#eee}
:host{border-bottom:1px solid #241a25}.st{width:28px}
.q{display:flex;width:344px;background:#f2f2f2;border-top:1px solid #b5b5b5;box-sizing:border-box;color:#444;overflow:hidden}.q svg{flex:none}
.q fit-text{margin:10px 0 0 8px;font-size:14px;line-height:20px;height:20px}.mic{margin:11px 0 0 112px}
.act{width:43px;background:#3a3c3c;box-sizing:border-box;padding-left:10px;height:20px;border-right:1px solid #1c1e1e}.ck{line-height:16px;padding-top:3px;flex:none}.peek{width:1px;height:20px;background:#888;margin-left:18px}`,
`<div class="st"><big-icon name="start"></big-icon></div><div class="q"><svg width="30" height="20" style="margin-left:2px"><circle cx="18" cy="18.5" r="9" fill="none" stroke="#111" stroke-width="3"/></svg><fit-text w="168">在这里输入你要搜索的内容</fit-text><svg class="mic" width="8" height="20"><rect x=".7" y=".7" width="6" height="12" fill="none" stroke="#333" stroke-width="1.3"/></svg></div>${bar}`);
def('back-edge',`:host{display:flex;flex-direction:column;width:8px;height:1019px;border-right:1px solid #9b9b9b;background:linear-gradient(90deg,#fff,#dedede)}
.a{height:32px;background:#8e8e8e;border-radius:0 0 6px 0}.b{height:69px}.c{height:51px;background:#1e1e1e;border-bottom:1px solid #000}`,
'<div class="a"></div><div class="b"></div><div class="c"></div>');
def('desktop-screen',`:host{position:relative;display:flex;flex-direction:column;width:1919px;height:1039px;overflow:hidden;background:#fff}
.top{display:flex;height:1019px}.w{width:1892px;display:flex;flex-direction:column}recorder-window{position:absolute;left:706px;top:415px}`,
`<div class="top"><back-edge></back-edge><div class="w"><tab-strip></tab-strip><address-bar></address-bar><bookmark-bar></bookmark-bar><acme-navbar></acme-navbar><acme-page></acme-page></div></div><task-bar></task-bar><recorder-window></recorder-window>`);
</script>
</body>
</html>
